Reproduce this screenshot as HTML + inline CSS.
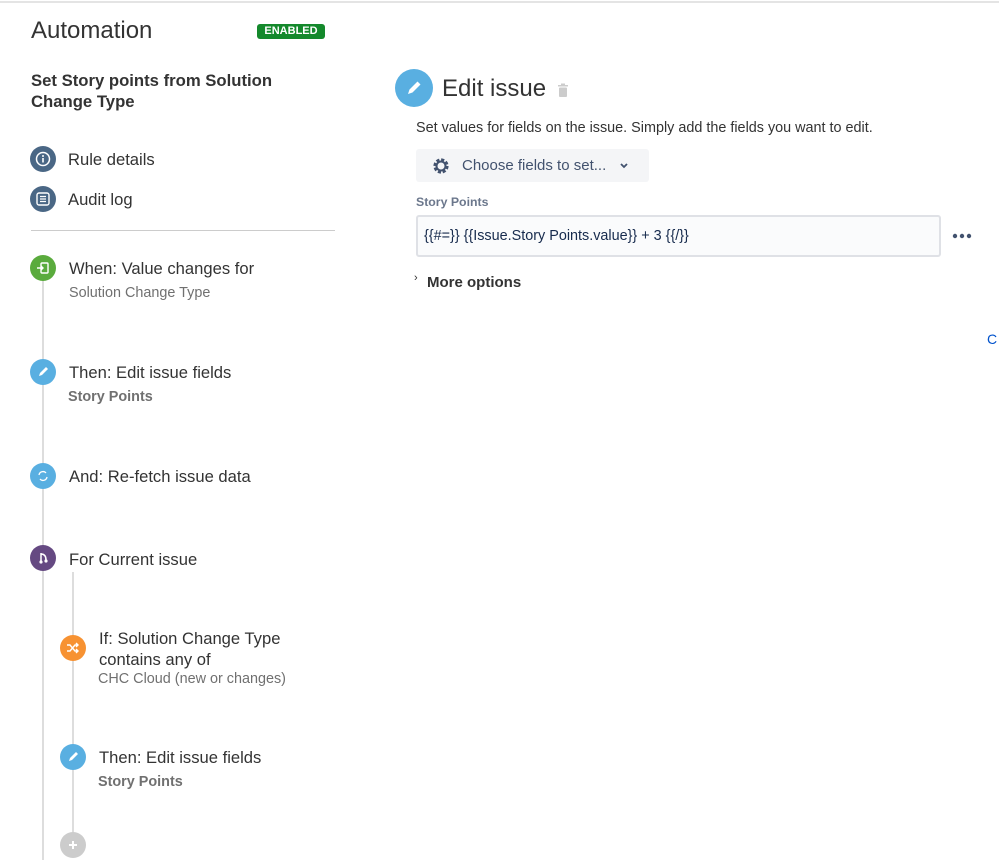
<!DOCTYPE html>
<html><head><style>
body{margin:0;width:999px;height:860px;position:relative;background:#fff;font-family:"Liberation Sans",Arial,sans-serif;overflow:hidden;color:#333}
.a{position:absolute;white-space:nowrap}
.c{position:absolute;border-radius:50%;display:flex;align-items:center;justify-content:center}
.t{font-size:16.6px;color:#333}
.s{font-size:14.4px;color:#707070}
.b{font-size:14.4px;color:#707070;font-weight:bold}
</style></head><body>
<div class="a" style="left:0;top:1px;width:999px;height:2px;background:#e4e4e4"></div>
<div class="a" style="left:31px;top:17px;font-size:24px;color:#333">Automation</div>
<div class="a" style="left:257px;top:24px;width:68px;height:15px;background:#14892c;border-radius:3px;color:#fff;font-size:11px;font-weight:bold;text-align:center;line-height:15px">ENABLED</div>
<div class="a" style="left:31px;top:70px;font-size:16.7px;font-weight:bold;line-height:21px;color:#333">Set Story points from Solution<br>Change Type</div>

<div class="c" style="left:30px;top:146px;width:26px;height:26px;background:#4a6785"><svg width="16" height="16" viewBox="0 0 16 16"><circle cx="8" cy="8" r="6.5" fill="none" stroke="#fff" stroke-width="1.5"/><rect x="7.2" y="7" width="1.6" height="4.5" fill="#fff"/><circle cx="8" cy="5" r="1" fill="#fff"/></svg></div>
<div class="a t" style="left:68px;top:150px">Rule details</div>
<div class="c" style="left:30px;top:186px;width:26px;height:26px;background:#4a6785"><svg width="16" height="16" viewBox="0 0 16 16"><rect x="2" y="2" width="12" height="12" rx="2" fill="none" stroke="#fff" stroke-width="1.4"/><path d="M5 5.5h6M5 8h6M5 10.5h6" stroke="#fff" stroke-width="1.2"/></svg></div>
<div class="a t" style="left:68px;top:190px">Audit log</div>
<div class="a" style="left:31px;top:230px;width:304px;height:1px;background:#ccc"></div>

<div class="a" style="left:42px;top:262px;width:2px;height:598px;background:#ddd"></div>
<div class="a" style="left:72px;top:572px;width:2px;height:270px;background:#ddd"></div>

<div class="c" style="left:30px;top:255px;width:26px;height:26px;background:#5aab3d"><svg width="14" height="14" viewBox="0 0 14 14"><rect x="5" y="2" width="7" height="10" rx="1" fill="none" stroke="#fff" stroke-width="1.4"/><path d="M1 7h6M5 5l2 2-2 2" stroke="#fff" stroke-width="1.4" fill="none"/></svg></div>
<div class="a t" style="left:69px;top:259px">When: Value changes for</div>
<div class="a s" style="left:69px;top:285px">Solution Change Type</div>

<div class="c" style="left:30px;top:359px;width:26px;height:26px;background:#59afe1"><svg width="14" height="14" viewBox="0 0 14 14"><path d="M3 11l1-3 6-6 2 2-6 6z" fill="#fff"/></svg></div>
<div class="a t" style="left:69px;top:363px">Then: Edit issue fields</div>
<div class="a b" style="left:68px;top:389px">Story Points</div>

<div class="c" style="left:30px;top:463px;width:26px;height:26px;background:#59afe1"><svg width="14" height="14" viewBox="0 0 14 14"><path d="M3 6a4 4 0 0 1 7-2M11 8a4 4 0 0 1-7 2" stroke="#fff" stroke-width="1.3" fill="none"/></svg></div>
<div class="a t" style="left:69px;top:467px">And: Re-fetch issue data</div>

<div class="c" style="left:30px;top:545px;width:26px;height:26px;background:#654982"><svg width="14" height="14" viewBox="0 0 14 14"><path d="M5 2v8M5 3c4 0 5 3 5 6" stroke="#fff" stroke-width="1.5" fill="none"/><circle cx="5" cy="11" r="1.6" fill="#fff"/><circle cx="10" cy="10" r="1.6" fill="#fff"/></svg></div>
<div class="a t" style="left:69px;top:550px">For Current issue</div>

<div class="c" style="left:60px;top:635px;width:26px;height:26px;background:#f79232"><svg width="14" height="14" viewBox="0 0 14 14"><path d="M1 4h3l5 6h3M1 10h3l5-6h3M10 2l2 2-2 2M10 8l2 2-2 2" stroke="#fff" stroke-width="1.4" fill="none"/></svg></div>
<div class="a t" style="left:99px;top:628px;line-height:21px">If: Solution Change Type<br>contains any of</div>
<div class="a s" style="left:98px;top:671px">CHC Cloud (new or changes)</div>

<div class="c" style="left:60px;top:744px;width:26px;height:26px;background:#59afe1"><svg width="14" height="14" viewBox="0 0 14 14"><path d="M3 11l1-3 6-6 2 2-6 6z" fill="#fff"/></svg></div>
<div class="a t" style="left:99px;top:748px">Then: Edit issue fields</div>
<div class="a b" style="left:98px;top:774px">Story Points</div>

<div class="c" style="left:60px;top:832px;width:26px;height:26px;background:#ccc"><svg width="12" height="12" viewBox="0 0 12 12"><path d="M6 2v8M2 6h8" stroke="#fff" stroke-width="2"/></svg></div>

<div class="c" style="left:395px;top:69px;width:38px;height:38px;background:#59afe1"><svg width="20" height="20" viewBox="0 0 20 20"><path d="M4 16l1.5-4.5 8-8 3 3-8 8z" fill="#fff"/></svg></div>
<div class="a" style="left:442px;top:75px;font-size:24px;color:#333">Edit issue</div>
<svg class="a" style="left:557px;top:83px" width="12" height="15" viewBox="0 0 12 15"><rect x="1" y="2" width="10" height="1.5" fill="#ccc"/><rect x="4" y="0.5" width="4" height="2" fill="#ccc"/><rect x="2" y="4.5" width="8" height="9.5" rx="1" fill="#ccc"/></svg>
<div class="a" style="left:416px;top:120px;font-size:14.4px;color:#333">Set values for fields on the issue. Simply add the fields you want to edit.</div>
<div class="a" style="left:416px;top:149px;width:233px;height:33px;background:#f4f5f7;border-radius:3px"></div>
<svg class="a" style="left:431px;top:156px" width="20" height="20" viewBox="0 0 20 20"><circle cx="10" cy="10" r="6" fill="none" stroke="#42526e" stroke-width="3.2" stroke-dasharray="3 1.7"/><circle cx="10" cy="10" r="4.5" fill="none" stroke="#42526e" stroke-width="2"/></svg>
<div class="a" style="left:462px;top:157px;font-size:15px;color:#42526e">Choose fields to set...</div>
<svg class="a" style="left:619px;top:162px" width="10" height="8" viewBox="0 0 10 8"><path d="M2 2l3 3 3-3" stroke="#42526e" stroke-width="1.8" fill="none"/></svg>
<div class="a" style="left:416px;top:195px;font-size:12.3px;font-weight:bold;color:#6b778c">Story Points</div>
<div class="a" style="left:416px;top:215px;width:521px;height:38px;border:2px solid #dfe1e6;border-radius:3px;background:#fafbfc"></div>
<div class="a" style="left:424px;top:228px;font-size:14.4px;color:#172b4d">{{#=}} {{Issue.Story Points.value}} + 3 {{/}}</div>
<svg class="a" style="left:952px;top:233px" width="20" height="6"><circle cx="3" cy="3" r="2.2" fill="#42526e"/><circle cx="10" cy="3" r="2.2" fill="#42526e"/><circle cx="17" cy="3" r="2.2" fill="#42526e"/></svg>
<div class="a" style="left:414px;top:272px;font-size:11px;color:#333">›</div>
<div class="a" style="left:427px;top:274px;font-size:15px;font-weight:bold;color:#333">More options</div>
<div class="a" style="left:987px;top:331px;font-size:14px;color:#0052cc">C</div>
</body></html>
